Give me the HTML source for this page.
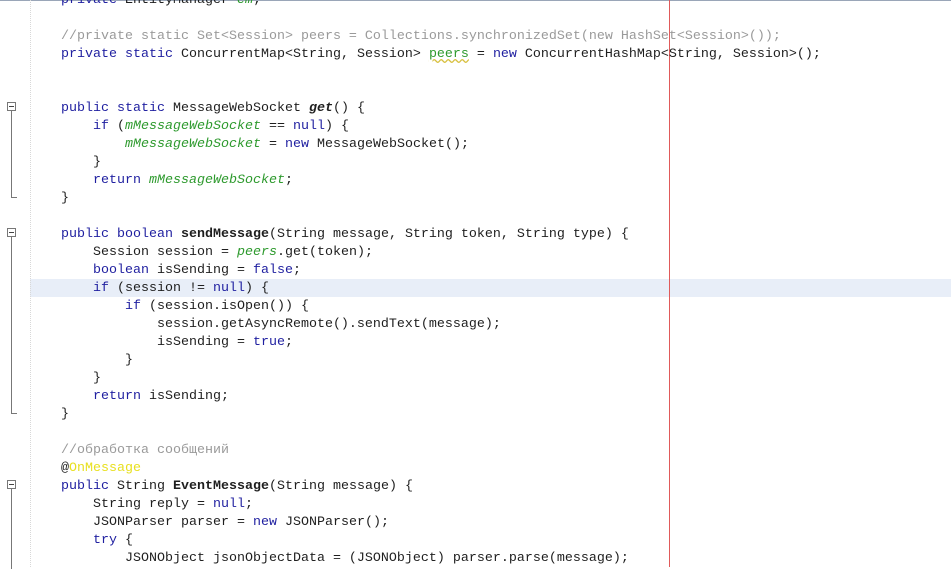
<!DOCTYPE html>
<html><head><meta charset="utf-8"><style>
html,body{margin:0;padding:0;width:951px;height:567px;overflow:hidden;background:#fff;}
.top{position:absolute;left:0;top:0;width:951px;height:1px;background:#9aa6b8;}
.gut{position:absolute;left:30px;top:0;width:0;height:567px;border-left:1px dotted #d8d8d8;}
.margin{position:absolute;left:669px;top:0;width:1px;height:567px;background:#e05a5a;}
.hl{position:absolute;left:30px;top:279px;width:921px;height:18px;background:#e8eef8;}
pre{position:absolute;left:61px;top:-8px;margin:0;font-family:"Liberation Mono","DejaVu Sans Mono",monospace;font-size:13.33px;line-height:18px;color:#1e1e1e;}
.k{color:#1f1fa0}.c{color:#9a9a9a}.g{color:#2e9a2e;font-style:italic}.b{font-weight:bold}.i{font-style:italic}
.u{text-decoration:underline wavy #d8c040;}
.y{color:#e8e020}
.f{position:absolute;left:7px;width:9px;height:9px;border:1px solid #777;background:#fff;box-sizing:border-box;}
.f::after{content:"";position:absolute;left:1px;top:3px;width:5px;height:1px;background:#444;}
.v{position:absolute;left:11px;width:1px;background:#777;}
.h{position:absolute;left:11px;width:6px;height:1px;background:#777;}
</style></head><body>
<div class="hl"></div>
<div class="top"></div>
<div class="gut"></div>
<div class="margin"></div>
<div class="f" style="top:102px"></div><div class="v" style="top:111px;height:86px"></div><div class="h" style="top:197px"></div>
<div class="f" style="top:228px"></div><div class="v" style="top:237px;height:176px"></div><div class="h" style="top:413px"></div>
<div class="f" style="top:480px"></div><div class="v" style="top:489px;height:80px"></div>
<pre><span class="k">private</span> EntityManager <span class="g">em</span>;

<span class="c">//private static Set&lt;Session&gt; peers = Collections.synchronizedSet(new HashSet&lt;Session&gt;());</span>
<span class="k">private static</span> ConcurrentMap&lt;String, Session&gt; <span class="g u" style="font-style:normal">peers</span> = <span class="k">new</span> ConcurrentHashMap&lt;String, Session&gt;();


<span class="k">public static</span> MessageWebSocket <span class="b i">get</span>() {
    <span class="k">if</span> (<span class="g">mMessageWebSocket</span> == <span class="k">null</span>) {
        <span class="g">mMessageWebSocket</span> = <span class="k">new</span> MessageWebSocket();
    }
    <span class="k">return</span> <span class="g">mMessageWebSocket</span>;
}

<span class="k">public boolean</span> <span class="b">sendMessage</span>(String message, String token, String type) {
    Session session = <span class="g">peers</span>.get(token);
    <span class="k">boolean</span> isSending = <span class="k">false</span>;
    <span class="k">if</span> (session != <span class="k">null</span>) {
        <span class="k">if</span> (session.isOpen()) {
            session.getAsyncRemote().sendText(message);
            isSending = <span class="k">true</span>;
        }
    }
    <span class="k">return</span> isSending;
}

<span class="c">//обработка сообщений</span>
@<span class="y">OnMessage</span>
<span class="k">public</span> String <span class="b">EventMessage</span>(String message) {
    String reply = <span class="k">null</span>;
    JSONParser parser = <span class="k">new</span> JSONParser();
    <span class="k">try</span> {
        JSONObject jsonObjectData = (JSONObject) parser.parse(message);
</pre>
</body></html>
